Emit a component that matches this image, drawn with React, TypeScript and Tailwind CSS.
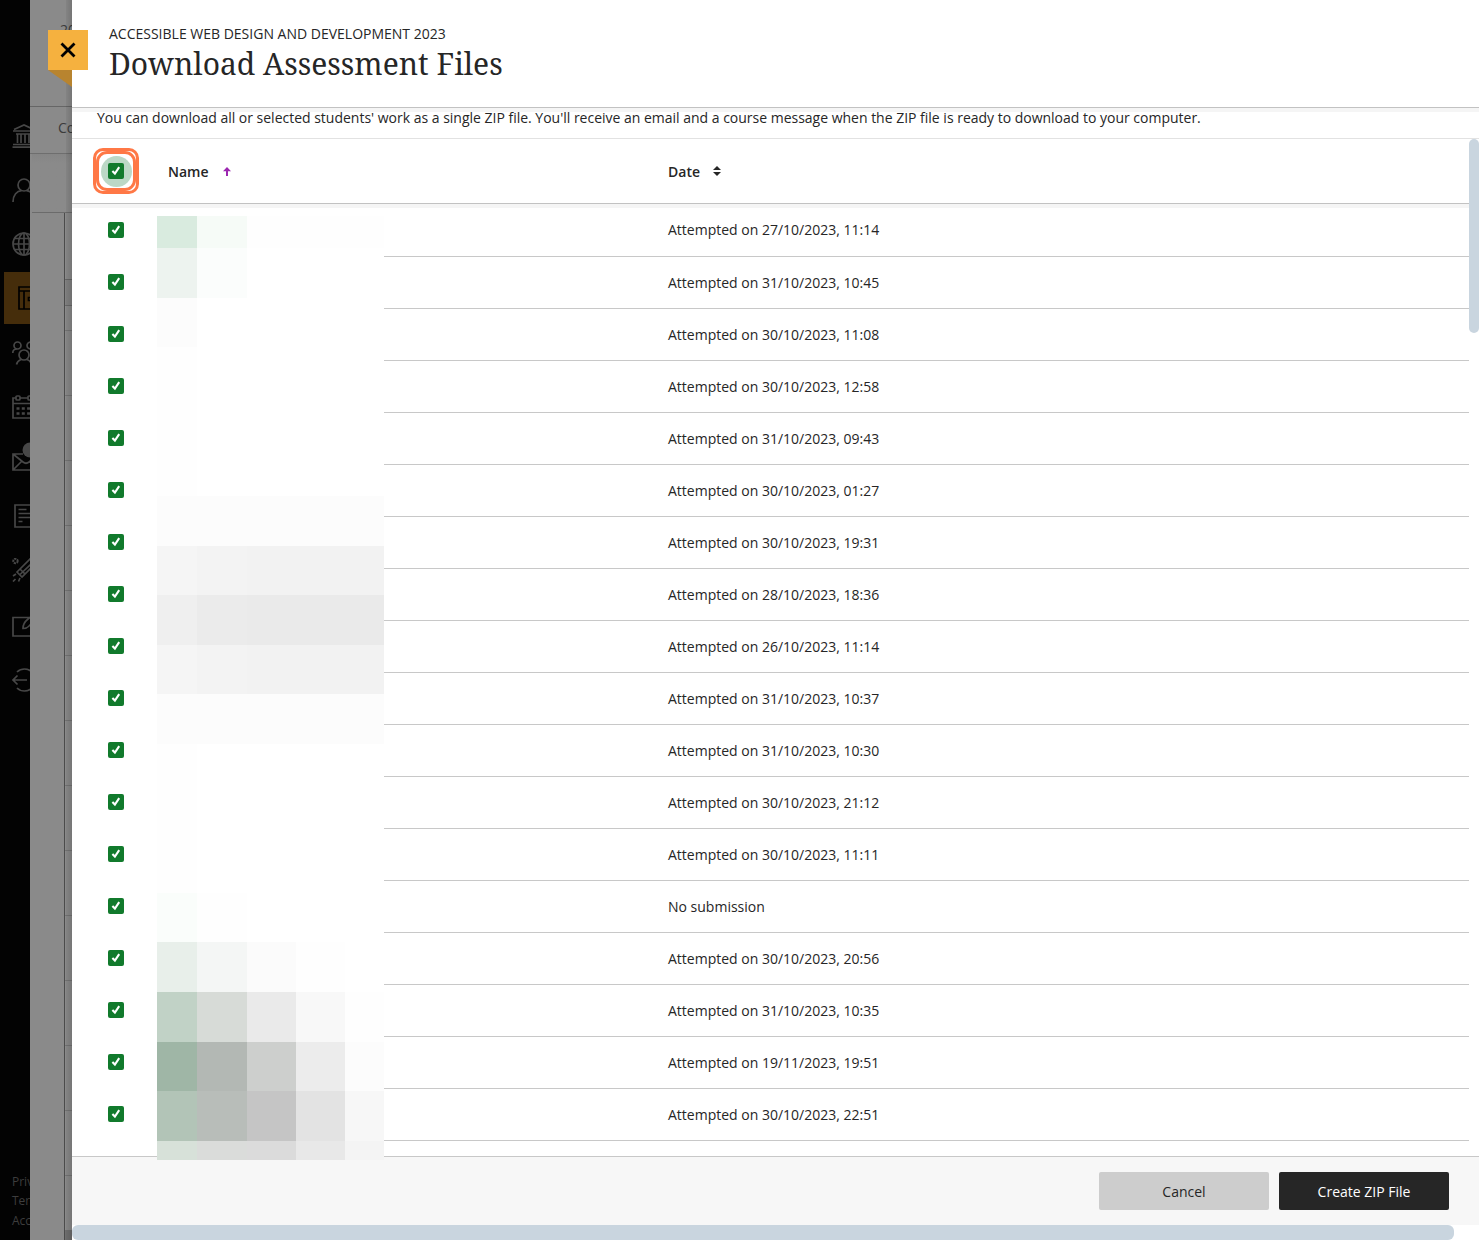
import type { ReactNode } from "react";

const attempts = [
  "Attempted on 27/10/2023, 11:14",
  "Attempted on 31/10/2023, 10:45",
  "Attempted on 30/10/2023, 11:08",
  "Attempted on 30/10/2023, 12:58",
  "Attempted on 31/10/2023, 09:43",
  "Attempted on 30/10/2023, 01:27",
  "Attempted on 30/10/2023, 19:31",
  "Attempted on 28/10/2023, 18:36",
  "Attempted on 26/10/2023, 11:14",
  "Attempted on 31/10/2023, 10:37",
  "Attempted on 31/10/2023, 10:30",
  "Attempted on 30/10/2023, 21:12",
  "Attempted on 30/10/2023, 11:11",
  "No submission",
  "Attempted on 30/10/2023, 20:56",
  "Attempted on 31/10/2023, 10:35",
  "Attempted on 19/11/2023, 19:51",
  "Attempted on 30/10/2023, 22:51",
];

// Pixelated cover over the student names: row height followed by one colour per column.
const mosaic: [number, string[]][] = [
  [32, ["#d9ebdf", "#f6fbf7", "#fefefe", "#fefefe", "#fefefe"]],
  [50, ["#edf3ef", "#fbfdfc", "#ffffff", "#ffffff", "#ffffff"]],
  [49, ["#fcfcfc", "#ffffff", "#ffffff", "#ffffff", "#ffffff"]],
  [149, ["#fefefe", "#ffffff", "#ffffff", "#ffffff", "#ffffff"]],
  [50, ["#fcfcfc", "#fcfcfc", "#fcfcfc", "#fcfcfc", "#fcfcfc"]],
  [49, ["#f5f5f5", "#f3f3f3", "#f2f2f2", "#f2f2f2", "#f2f2f2"]],
  [50, ["#efefef", "#ebebeb", "#eaeaea", "#eaeaea", "#eaeaea"]],
  [49, ["#f5f5f5", "#f3f3f3", "#f2f2f2", "#f2f2f2", "#f2f2f2"]],
  [50, ["#fcfcfc", "#fcfcfc", "#fcfcfc", "#fcfcfc", "#fcfcfc"]],
  [149, ["#fefefe", "#ffffff", "#ffffff", "#ffffff", "#ffffff"]],
  [49, ["#fafdfb", "#fefefe", "#ffffff", "#ffffff", "#ffffff"]],
  [50, ["#e8efea", "#f4f6f5", "#fbfbfb", "#fefefe", "#ffffff"]],
  [50, ["#c1d2c6", "#d7dbd7", "#eaeaea", "#f8f8f8", "#fefefe"]],
  [49, ["#9fb6a6", "#b3b8b4", "#cdcfcd", "#ececec", "#fcfcfc"]],
  [50, ["#b2c4b7", "#b8bdb9", "#c5c5c5", "#e3e3e3", "#f7f7f7"]],
  [19, ["#d7e1d9", "#dadcda", "#dbdbdb", "#e8e8e8", "#f4f4f4"]],
];

function Glyph({ children }: { children: ReactNode }) {
  return (
    <svg width="24" height="24" viewBox="0 0 24 24" fill="none" stroke="currentColor" strokeWidth="1.7" className="shrink-0">
      {children}
    </svg>
  );
}

function Sidebar() {
  return (
    <nav className="flex h-full w-[30px] shrink-0 flex-col overflow-hidden bg-[#030303] pt-[109px] text-[#474747]">
      <div className="flex h-[54px] items-center pl-3">
        <Glyph>
          <path d="M2 5.5 12 1l10 4.500M1 7h22M4 10h16M1 20.500h22M.5 23.200h23M5.500 10v9M9 10v9M13 10v9M17 10v9M21 10v9" />
        </Glyph>
      </div>
      <div className="flex h-[54px] items-center pl-3">
        <Glyph>
          <circle cx="12" cy="7" r="6" />
          <path d="M1 24C1 17 5 13 9.500 12.600M23 24c0-7-4-11-8.500-11.400" />
        </Glyph>
      </div>
      <div className="flex h-[54px] items-center pl-3">
        <Glyph>
          <circle cx="12" cy="12" r="11" />
          <ellipse cx="12" cy="12" rx="5.500" ry="11" />
          <path d="M12 1v22M1 12h22M3 6.500h18M3 17.500h18" />
        </Glyph>
      </div>
      <div className="flex h-[54px] items-start pt-px pl-1">
        <div className="flex h-[52px] w-12 items-center bg-[#452d0b] pl-[14px] text-black">
          <Glyph>
            <path d="M1 1h22v22H1zM1 5h22M6 5v18" />
            <path d="M23 11.500H10.500v3H23" />
          </Glyph>
        </div>
      </div>
      <div className="flex h-14 items-center pl-3">
        <Glyph>
          <circle cx="5.500" cy="4.500" r="3.500" />
          <circle cx="18.500" cy="4.500" r="3.500" />
          <path d="M.8 12c0-2.500 1.500-4 4-4M23 12c0-2.500-1.500-4-4-4M4.500 23.500c.5-2.500 2-4 4.500-5M19.500 23.500c-.5-2.500-2-4-4.500-5" />
          <circle cx="12" cy="14" r="5" />
        </Glyph>
      </div>
      <div className="flex h-[52px] items-center pl-3">
        <Glyph>
          <path d="M4 3H1v20h22V3h-3M8 3h8M1 8.500h22" />
          <rect x="4" y="1" width="4" height="4" rx="1" />
          <rect x="16" y="1" width="4" height="4" rx="1" />
          <path strokeWidth="2.500" strokeDasharray="3 2.300" d="M4.500 13.500h16M4.500 18.500h16" />
        </Glyph>
      </div>
      <div className="flex h-[54px] items-center pb-[6px] pl-3">
        <svg width="28" height="30" viewBox="0 0 28 30" fill="none" stroke="currentColor" strokeWidth="1.700" className="shrink-0">
          <path d="M11 12H1v16h26V12M1 12l10 8q3 2.500 6 0l9-8M1 28l9-9M26 28l-9-9" />
          <circle cx="18" cy="8" r="7.500" fill="currentColor" stroke="none" />
        </svg>
      </div>
      <div className="flex h-[58px] items-center pl-[14px]">
        <Glyph>
          <path d="M20 17V1H1v22h16v-4h4M4.500 5.500h8M4.500 9.500h12M4.500 13.500h12M4.500 17.500h4" />
        </Glyph>
      </div>
      <div className="flex h-[50px] items-center pl-3">
        <Glyph>
          <circle cx="3.500" cy="3" r="2.200" strokeWidth="2" strokeDasharray="2 .7" />
          <path d="M5 14 18 1l5 5-13 13zM8 11l5 5M8 16.500 18.500 6.500M4 16l-3 2M1 23.500l2.500-2.500M8 20l-1.500 3.500" />
        </Glyph>
      </div>
      <div className="flex h-[62px] items-center pl-3">
        <Glyph>
          <path d="M19 3.500H1V22h22v-9M11 14.500c0-4 2-7 4.500-9L21 1l3 3-6 7c-2 2.500-4 3.500-7 3.500Z" />
        </Glyph>
      </div>
      <div className="flex h-[46px] items-center pl-3">
        <Glyph>
          <path d="M1 12h14M5.500 7.500 1 12l4.500 4.500M5 4C9 0 16 0 20 4M5 20c4 4 11 4 15 0" />
        </Glyph>
      </div>
      <div className="mt-auto mb-[10px] flex flex-col pl-3 text-[12px] leading-[19.5px] text-[#3d3d3d]">
        <span>Privacy</span>
        <span>Terms</span>
        <span>Accessibility</span>
      </div>
    </nav>
  );
}

function CoursePageEdge() {
  return (
    <div className="relative flex h-full w-[42px] shrink-0 flex-col overflow-hidden bg-[#8a8a8a] text-sm text-[#3b3b3b]">
      <div className="h-[107px] overflow-hidden border-b border-[#666] pt-[20px] pl-[30px] whitespace-nowrap">20</div>
      <div className="h-[47px] overflow-hidden border-b border-[#6e6e6e] pt-[11px] pl-[28px] whitespace-nowrap">Co</div>
      <div className="ml-[2px] h-[59px] border-b border-[#6b6b6b] bg-linear-to-b from-[#858585] to-[#8a8a8a] to-15%" />
      <div className="ml-[34px] flex min-h-0 flex-1 flex-col border-l border-[#4b4b4b]">
        <div className="h-[67px] shrink-0 border-b border-[#666]" />
        <div className="h-[26px] shrink-0 border-b border-[#696969] bg-[#828282]" />
        <div className="h-[25px] shrink-0 border-b border-[#747474]" />
        {Array.from({ length: 13 }, (_, i) => (
          <div key={i} className="h-[65px] shrink-0 border-b border-[#747474]" />
        ))}
        <div className="h-[54px] shrink-0" />
        <div className="flex-1 bg-[#6f6f6f]" />
      </div>
      <div className="absolute inset-y-0 right-0 w-[6px] bg-linear-to-r from-black/5 to-black/15" />
    </div>
  );
}

function Checkbox() {
  return (
    <span className="flex size-4 items-center justify-center rounded-[2px] bg-[#117a2c]">
      <svg width="10" height="10" viewBox="0 0 10 10" fill="none" stroke="white" strokeWidth="2.100">
        <path d="M1.400 5 3.900 7.600 8.200 1.200" />
      </svg>
    </span>
  );
}

function NameMosaic() {
  return (
    <div className="absolute top-[77px] left-[85px] w-[227px]">
      {mosaic.map(([height, colours], r) => (
        <div key={r} className="grid grid-cols-[40px_50px_49px_49px_39px]" style={{ height }}>
          {colours.map((backgroundColor, c) => (
            <div key={c} style={{ backgroundColor }} />
          ))}
        </div>
      ))}
    </div>
  );
}

function AttemptTable() {
  return (
    <div className="relative h-[1017px]">
      <div className="h-full w-[1397px] overflow-hidden">
        <div className="flex h-[65px] items-center border-b border-[#c2c2c2] text-sm font-semibold">
          <div className="flex w-[96px] pl-[21px]">
            <div className="flex size-[46px] items-center justify-center rounded-[10px] border-[3px] border-[#ff7846]">
              <div className="flex size-10 shrink-0 items-center justify-center rounded-[11px] border-[3px] border-[#ff7846]">
                <div className="flex size-[31px] shrink-0 items-center justify-center rounded-full bg-[#bcd8c6]">
                  <Checkbox />
                </div>
              </div>
            </div>
          </div>
          <div className="flex w-[500px] items-center">
            <span className="pt-[2px]">Name</span>
            <svg width="8" height="9" viewBox="0 0 8 9" className="ml-[14px]" fill="#9c27b0">
              <path d="M4 0 8 4.200H5V9H3V4.200H0Z" />
            </svg>
          </div>
          <span className="pt-[2px]">Date</span>
          <svg width="8" height="10" viewBox="0 0 8 10" className="ml-[13px]" fill="#262626">
            <path d="M4 0 8 4H0ZM4 10 0 6h8Z" />
          </svg>
        </div>
        <div className="h-1 bg-[#f5f5f5]" />
        <div className="-mt-1">
          {attempts.map((text, i) => (
            <div key={i} className={i === 0 ? "flex h-[53px]" : "flex h-[52px]"}>
              <div className={i === 0 ? "w-[88px] pt-[18px] pl-9" : "w-[88px] pt-[17px] pl-9"}>
                <Checkbox />
              </div>
              <div className="flex-1 border-b border-[#c8c8c8] pt-[16px] pl-[508px] text-sm">{text}</div>
            </div>
          ))}
        </div>
      </div>
      <NameMosaic />
      <div className="absolute top-0 right-0 h-[194px] w-[10px] rounded-full bg-[#c9d5df]" />
    </div>
  );
}

export default function App() {
  return (
    <div className="flex h-[1240px] w-[1479px] overflow-hidden bg-white font-['Open_Sans',sans-serif] text-[#262626]">
      <Sidebar />
      <CoursePageEdge />
      <main className="relative flex min-w-0 flex-1 flex-col bg-white">
        <header className="h-[108px] shrink-0 border-b border-[#c2c2c2] pt-[24px] pl-[37px]">
          <div className="text-sm leading-5">ACCESSIBLE WEB DESIGN AND DEVELOPMENT 2023</div>
          <h1 className="font-['Noto_Serif','DejaVu_Serif',serif] text-[30px] leading-10 whitespace-nowrap">
            Download Assessment Files
          </h1>
        </header>
        <div className="h-[31px] shrink-0 border-b border-[#e2e2e2]">
          <div className="h-1 bg-[#f5f5f5]" />
          <p className="-mt-1 pl-[25px] text-sm leading-5 tracking-[-0.009px] whitespace-nowrap">
            You can download all or selected students' work as a single ZIP file. You'll receive an email and a course message when the ZIP file is ready to download to your computer.
          </p>
        </div>
        <AttemptTable />
        <footer className="flex h-[69px] shrink-0 items-start justify-end gap-[10px] border-t border-[#c8c8c8] bg-[#f7f7f7] pt-[15px] pr-[30px] text-sm">
          <button className="h-[38px] w-[170px] rounded-[2px] bg-[#cdcdcd] pt-[2px]">Cancel</button>
          <button className="h-[38px] w-[170px] rounded-[2px] bg-[#262626] pt-[2px] text-white">Create ZIP File</button>
        </footer>
        <div className="h-[15px] w-[1382px] rounded-[6px] bg-[#c9d5df]" />
        <div className="absolute top-[30px] -left-6">
          <button aria-label="Close" className="flex size-10 items-center justify-center bg-[#f5b13f] pb-px">
            <svg width="16" height="16" viewBox="0 0 16 16" stroke="black" strokeWidth="2.800">
              <path d="M1.500 1.500l13 13M14.500 1.500l-13 13" />
            </svg>
          </button>
          <svg width="24" height="17" viewBox="0 0 24 17" className="block" fill="#b8842f">
            <path d="M0 0h24v17Z" />
          </svg>
        </div>
      </main>
    </div>
  );
}
